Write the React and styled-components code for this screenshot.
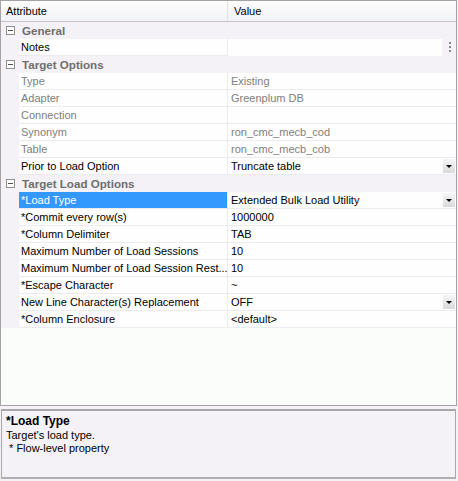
import React from "react";
import styled, { createGlobalStyle } from "styled-components";

const Global = createGlobalStyle`
  html, body { margin: 0; padding: 0; background: #f4f2f6; }
  body { font-family: "Liberation Sans", Arial, sans-serif; font-size: 11px; }
`;

const Page = styled.div`
  width: 458px;
  height: 481px;
  display: flex;
  flex-direction: column;
  box-sizing: border-box;
  padding: 0 1px 2px 0;
  background: #f4f2f6;
`;

const Grid = styled.div`
  flex: 1;
  display: flex;
  flex-direction: column;
  border: 1px solid #a3a3a3;
  background: #fbfdfb;
  overflow: hidden;
`;

const Header = styled.div`
  display: grid;
  grid-template-columns: 227px 1fr;
  height: 20px;
  border-bottom: 1px solid #c5c5c5;
  background: linear-gradient(#fdfdfd, #f1f2f6);
  color: #000;
`;

const HeaderCell = styled.div`
  display: flex;
  align-items: center;
  padding-left: ${p => p.$pad}px;
  border-right: ${p => (p.$last ? "none" : "1px solid #e2e2e6")};
`;

const Row = styled.div`
  display: grid;
  grid-template-columns: 18px 209px 1fr;
  height: 17px;
  box-sizing: border-box;
  background: #f4f2f6;
`;

const Gutter = styled.div``;

const NameCell = styled.div`
  display: flex;
  align-items: center;
  padding-left: 2px;
  border-bottom: 1px solid #ececf0;
  border-right: 1px solid #ececf0;
  white-space: nowrap;
  overflow: hidden;
  color: ${p => (p.$selected ? "#fff" : p.$disabled ? "#808080" : "#000")};
  background: ${p => (p.$selected ? "#3399ff" : "#fdfefd")};
`;

const ValueCell = styled.div`
  display: flex;
  align-items: center;
  padding-left: 3px;
  border-bottom: 1px solid #ececf0;
  white-space: nowrap;
  color: ${p => (p.$disabled ? "#808080" : "#000")};
  background: #fdfefd;
  position: relative;
`;

const Category = styled.div`
  display: flex;
  align-items: center;
  height: 17px;
  background: #f4f2f6;
  font-weight: bold;
  font-size: 11.6px;
  color: #6e6e6e;
`;

const Toggle = styled.span`
  width: 9px;
  height: 9px;
  box-sizing: border-box;
  border: 1px solid #8f8f8f;
  margin: 0 7px 0 5px;
  display: flex;
  align-items: center;
  justify-content: center;
  background: #fff;
  &::after {
    content: "";
    width: 5px;
    height: 1px;
    background: #505050;
  }
`;

const DropButton = styled.span`
  position: absolute;
  right: 1px;
  top: 1px;
  width: 12px;
  height: 14px;
  background: linear-gradient(#f6f6f6, #d9d9d9);
  display: flex;
  align-items: center;
  justify-content: center;
  &::after {
    content: "";
    border-left: 3px solid transparent;
    border-right: 3px solid transparent;
    border-top: 3px solid #000;
    margin-top: 1px;
  }
`;

const Ellipsis = styled.span`
  position: absolute;
  right: -9px;
  top: 3px;
  display: flex;
  flex-direction: column;
  gap: 2px;
  span {
    width: 2px;
    height: 2px;
    background: #8a8a8a;
  }
`;

const NotesValue = styled(ValueCell)`
  margin-right: 14px;
  border-bottom: none;
`;

const Empty = styled.div`
  flex: 1;
  background: #fbfdfb;
`;

const Desc = styled.div`
  height: 70px;
  margin: 3px 1px 0 1px;
  border-style: solid;
  border-width: 2px 1px 2px 1px;
  border-color: #a8a8a8 #a8a8a8 #b0b0b0 #a8a8a8;
  background: #f4f2f6;
  padding: 3px 4px;
  box-sizing: border-box;
  line-height: 13px;
`;

const DescTitle = styled.div`
  font-weight: bold;
  font-size: 12px;
  line-height: 15px;
`;

const sections = [
  {
    title: "General",
    rows: [{ name: "Notes", value: "", notes: true }],
  },
  {
    title: "Target Options",
    rows: [
      { name: "Type", value: "Existing", disabled: true },
      { name: "Adapter", value: "Greenplum DB", disabled: true },
      { name: "Connection", value: "", disabled: true },
      { name: "Synonym", value: "ron_cmc_mecb_cod", disabled: true },
      { name: "Table", value: "ron_cmc_mecb_cob", disabled: true },
      { name: "Prior to Load Option", value: "Truncate table", drop: true },
    ],
  },
  {
    title: "Target Load Options",
    rows: [
      { name: "*Load Type", value: "Extended Bulk Load Utility", drop: true, selected: true },
      { name: "*Commit every row(s)", value: "1000000" },
      { name: "*Column Delimiter", value: "TAB" },
      { name: "Maximum Number of Load Sessions", value: "10" },
      { name: "Maximum Number of Load Session Rest...", value: "10" },
      { name: "*Escape Character", value: "~" },
      { name: "New Line Character(s) Replacement", value: "OFF", drop: true },
      { name: "*Column Enclosure", value: "<default>" },
    ],
  },
];

export default function App() {
  return (
    <Page>
      <Global />
      <Grid>
        <Header>
          <HeaderCell $pad={5}>Attribute</HeaderCell>
          <HeaderCell $pad={6} $last>Value</HeaderCell>
        </Header>
        {sections.map(sec => (
          <React.Fragment key={sec.title}>
            <Category>
              <Toggle />
              {sec.title}
            </Category>
            {sec.rows.map(r => (
              <Row key={r.name}>
                <Gutter />
                <NameCell $disabled={r.disabled} $selected={r.selected}>{r.name}</NameCell>
                {r.notes ? (
                  <NotesValue>
                    <Ellipsis><span /><span /><span /></Ellipsis>
                  </NotesValue>
                ) : (
                  <ValueCell $disabled={r.disabled}>
                    {r.value}
                    {r.drop && <DropButton />}
                  </ValueCell>
                )}
              </Row>
            ))}
          </React.Fragment>
        ))}
        <Empty />
      </Grid>
      <Desc>
        <DescTitle>*Load Type</DescTitle>
        <div>Target's load type.</div>
        <div>&nbsp;* Flow-level property</div>
      </Desc>
    </Page>
  );
}
